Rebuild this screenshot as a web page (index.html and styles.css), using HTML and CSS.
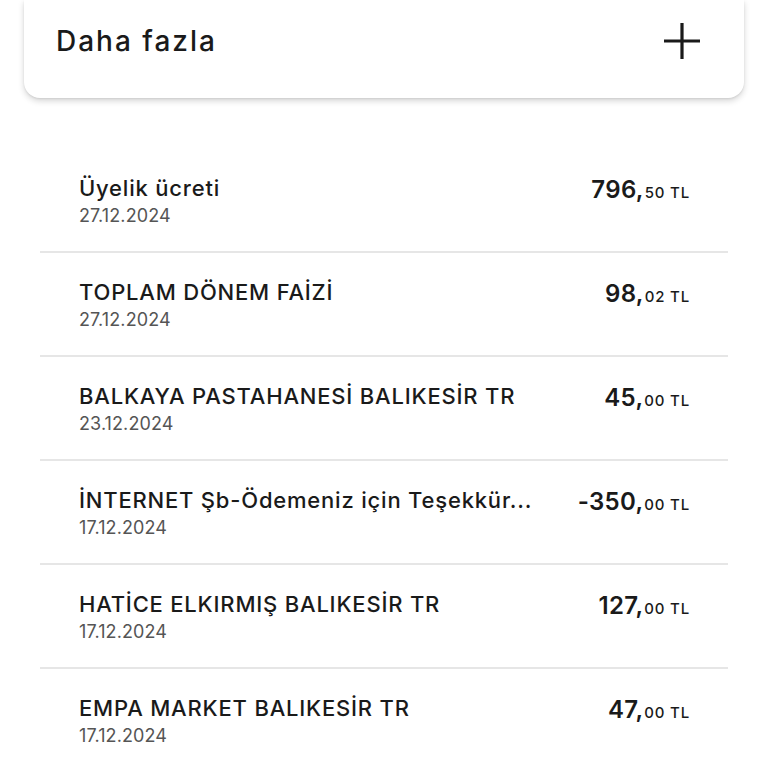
FILE: index.html
```html
<!DOCTYPE html>
<html lang="tr">
<head>
<meta charset="utf-8">
<link rel="stylesheet" href="styles.css">
</head>
<body>
<div class="page">
  <div class="card">
    <span class="card-title">Daha fazla</span>
    <svg class="plus" width="40" height="40" viewBox="0 0 40 40"><path d="M20 2V38M2 20H38" stroke="#1a1a1a" stroke-width="3.2" fill="none"/></svg>
  </div>
  <ul class="list">
    <li class="row"><div class="info"><div class="title">Üyelik ücreti</div><div class="date">27.12.2024</div></div><div class="amount"><b>796,</b><span class="dec">50 TL</span></div></li>
    <li class="row"><div class="info"><div class="title">TOPLAM DÖNEM FAİZİ</div><div class="date">27.12.2024</div></div><div class="amount"><b>98,</b><span class="dec">02 TL</span></div></li>
    <li class="row"><div class="info"><div class="title">BALKAYA PASTAHANESİ BALIKESİR TR</div><div class="date">23.12.2024</div></div><div class="amount"><b>45,</b><span class="dec">00 TL</span></div></li>
    <li class="row"><div class="info"><div class="title">İNTERNET Şb-Ödemeniz için Teşekkür...</div><div class="date">17.12.2024</div></div><div class="amount"><b>-350,</b><span class="dec">00 TL</span></div></li>
    <li class="row"><div class="info"><div class="title">HATİCE ELKIRMIŞ BALIKESİR TR</div><div class="date">17.12.2024</div></div><div class="amount"><b>127,</b><span class="dec">00 TL</span></div></li>
    <li class="row"><div class="info"><div class="title">EMPA MARKET BALIKESİR TR</div><div class="date">17.12.2024</div></div><div class="amount"><b>47,</b><span class="dec">00 TL</span></div></li>
  </ul>
</div>
</body>
</html>
```

FILE: styles.css
```css
* { box-sizing: border-box; }
html, body { margin: 0; padding: 0; background: #fff; }
body { font-family: Inter, "Noto Sans", sans-serif; color: #1a1a1a; width: 768px; height: 768px; overflow: hidden; }
.page { padding: 0 24px; }
.card {
  height: 98px;
  background: #fff;
  border-radius: 0 0 16px 16px;
  box-shadow: 0 3px 6px rgba(0,0,0,0.16), 0 1px 2px rgba(0,0,0,0.08);
  display: flex;
  align-items: center;
  justify-content: space-between;
  padding: 0 42px 16px 32px;
}
.card-title { font-size: 28px; font-weight: 500; letter-spacing: 2px; }
.plus { display: block; }
.list { list-style: none; margin: 51px 16px 0; padding: 0; }
.row {
  height: 104px;
  border-bottom: 2px solid #e6e6e6;
  display: flex;
  justify-content: space-between;
  align-items: flex-start;
  padding: 24px 38px 0 39px;
}
.title { font-size: 22px; font-weight: 500; line-height: 30px; letter-spacing: 0.8px; }
.date { font-size: 18px; color: #555; line-height: 25px; letter-spacing: 0.1px; }
.amount { display: flex; align-items: baseline; padding-top: 2px; }
.amount b { font-size: 24px; font-weight: 600; letter-spacing: 0.3px; }
.dec { font-size: 15px; font-weight: 500; margin-left: 1px; letter-spacing: 0.8px; }
```
